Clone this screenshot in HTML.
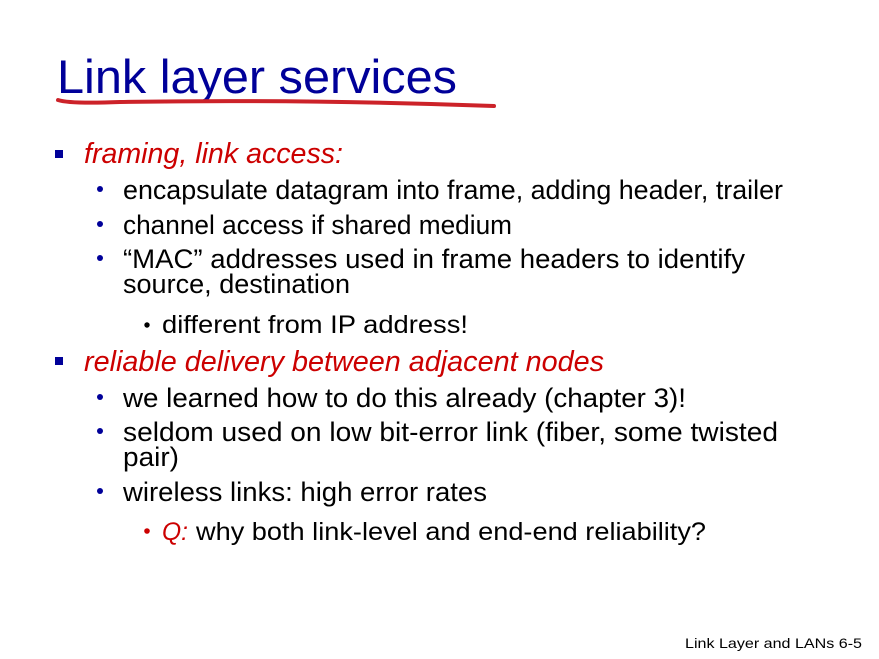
<!DOCTYPE html>
<html><head><style>body{margin:0;background:#fff}svg{display:block}</style></head><body>
<svg width="879" height="659" viewBox="0 0 879 659" xmlns="http://www.w3.org/2000/svg" font-family="Liberation Sans, sans-serif">
<text x="57" y="93" font-size="47" fill="#000099" textLength="400" lengthAdjust="spacingAndGlyphs">Link layer services</text>
<path d="M58 100 Q70 104 120 102 Q300 99 494 106" stroke="#cc2229" stroke-width="4" fill="none" stroke-linecap="round"/>
<rect x="55" y="150" width="8" height="8" fill="#000099"/>
<text x="84" y="163" font-size="29" font-style="italic" fill="#cc0000" textLength="259" lengthAdjust="spacingAndGlyphs">framing, link access:</text>
<g font-size="27" fill="#000">
<circle cx="100" cy="189" r="3" fill="#000099"/>
<text x="123" y="199" textLength="660" lengthAdjust="spacingAndGlyphs">encapsulate datagram into frame, adding header, trailer</text>
<circle cx="100" cy="224" r="3" fill="#000099"/>
<text x="123" y="234" textLength="389" lengthAdjust="spacingAndGlyphs">channel access if shared medium</text>
<circle cx="100" cy="258" r="3" fill="#000099"/>
<text x="123" y="268" textLength="622" lengthAdjust="spacingAndGlyphs">“MAC” addresses used in frame headers to identify</text>
<text x="123" y="293" textLength="227" lengthAdjust="spacingAndGlyphs">source, destination</text>
<circle cx="147" cy="325" r="2.7" fill="#000"/>
<text x="162" y="333" font-size="25" textLength="306" lengthAdjust="spacingAndGlyphs">different from IP address!</text>
</g>
<rect x="55" y="357" width="8" height="8" fill="#000099"/>
<text x="84" y="371" font-size="29" font-style="italic" fill="#cc0000" textLength="520" lengthAdjust="spacingAndGlyphs">reliable delivery between adjacent nodes</text>
<g font-size="27" fill="#000">
<circle cx="100" cy="397" r="3" fill="#000099"/>
<text x="123" y="407" textLength="563" lengthAdjust="spacingAndGlyphs">we learned how to do this already (chapter 3)!</text>
<circle cx="100" cy="431" r="3" fill="#000099"/>
<text x="123" y="441" textLength="655" lengthAdjust="spacingAndGlyphs">seldom used on low bit-error link (fiber, some twisted</text>
<text x="123" y="466" textLength="56" lengthAdjust="spacingAndGlyphs">pair)</text>
<circle cx="100" cy="491" r="3" fill="#000099"/>
<text x="123" y="501" textLength="364" lengthAdjust="spacingAndGlyphs">wireless links: high error rates</text>
<circle cx="147" cy="531" r="2.8" fill="#cc0000"/>
<text x="162" y="540" font-style="italic" fill="#cc0000" font-size="25" textLength="26" lengthAdjust="spacingAndGlyphs">Q:</text>
<text x="196" y="540" font-size="25" textLength="510" lengthAdjust="spacingAndGlyphs">why both link-level and end-end reliability?</text>
</g>
<text x="685" y="648" font-size="14" fill="#000" textLength="177" lengthAdjust="spacingAndGlyphs">Link Layer and LANs  6-5</text>
</svg>
</body></html>
